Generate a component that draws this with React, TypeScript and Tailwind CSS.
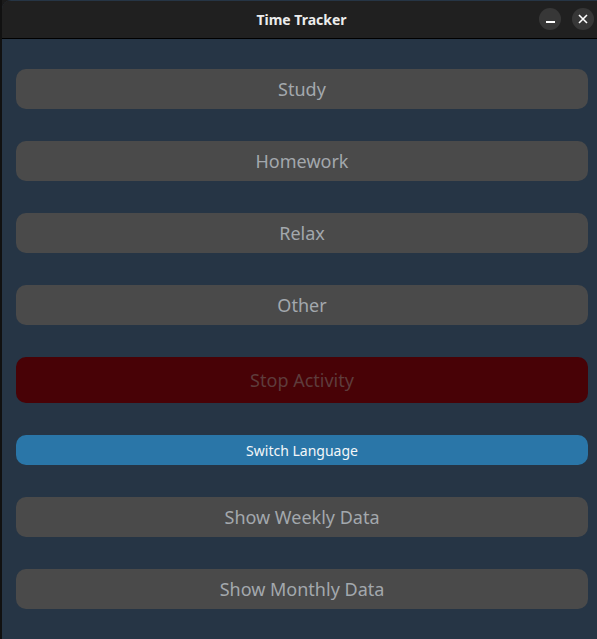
import React from "react";

const font = { fontFamily: '"Noto Sans", "Open Sans", sans-serif' };

function GreyBtn({ label }: { label: string }) {
  return (
    <button className="h-10 w-full rounded-[10px] bg-[#4a4a4a] text-[18px] text-[#a3a8ad]">
      {label}
    </button>
  );
}

export default function App() {
  return (
    <div className="flex h-[639px] w-[597px] bg-[#1b1b1b]" style={font}>
      <div className="w-[2px] shrink-0 bg-[#111]" />
      <div className="flex flex-1 flex-col overflow-hidden rounded-tl-[9px] bg-[#263545]">
        <div className="flex h-[38px] shrink-0 items-center justify-center border-b border-black bg-[#202020] relative mt-[1px]">
          <span className="pl-[4px] text-[14px] font-bold text-[#ececec]">Time Tracker</span>
          <div className="absolute right-[3px] top-[7px] flex gap-[11px]">
            <div className="flex h-[22px] w-[22px] items-center justify-center rounded-full bg-[#373737]">
              <div className="mt-[6px] h-[2px] w-[9px] bg-white" />
            </div>
            <div className="flex h-[22px] w-[22px] items-center justify-center rounded-full bg-[#373737]">
              <svg width="10" height="10" viewBox="0 0 10 10">
                <path d="M1 1L9 9M9 1L1 9" stroke="#fff" strokeWidth="1.6" />
              </svg>
            </div>
          </div>
        </div>
        <div className="flex flex-col gap-8 pl-[14px] pr-[9px] pt-[30px]">
          <GreyBtn label="Study" />
          <GreyBtn label="Homework" />
          <GreyBtn label="Relax" />
          <GreyBtn label="Other" />
          <button className="h-[46px] w-full rounded-[10px] bg-[#480206] text-[18px] text-[#5e3c3c]">
            Stop Activity
          </button>
          <button className="h-[30px] w-full rounded-[10px] bg-[#2a76a8] text-[14px] text-[#f3f6f8]">
            Switch Language
          </button>
          <GreyBtn label="Show Weekly Data" />
          <GreyBtn label="Show Monthly Data" />
        </div>
      </div>
    </div>
  );
}
